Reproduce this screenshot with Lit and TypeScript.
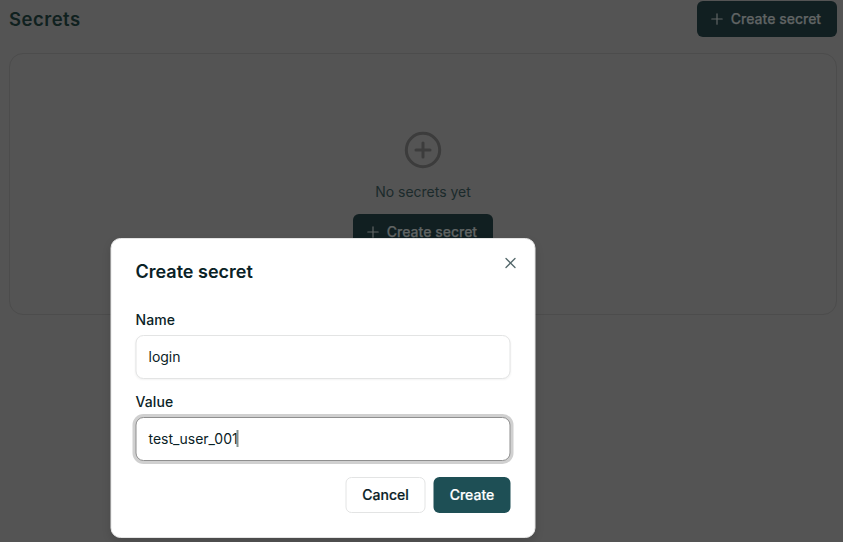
import { LitElement, html, css, svg } from "lit";
import { customElement, property } from "lit/decorators.js";

const plus = html`<svg class="plus" width="12" height="12" viewBox="0 0 12 12" fill="none" stroke="currentColor" stroke-width="1.2" stroke-linecap="round">
  ${svg`<path d="M6 .8v10.4M.8 6h10.4" />`}
</svg>`;

@customElement("text-field")
class TextField extends LitElement {
  @property() label = "";
  @property() value = "";
  @property({ type: Boolean, reflect: true }) active = false;

  static styles = css`
    :host { display: block; }
    .label { font-size: 14px; font-weight: 500; line-height: 20px; height: 25px; letter-spacing: 0.1px; }
    .box {
      display: flex; align-items: center; height: 44px; box-sizing: border-box;
      padding: 0 12px 2px; border: 1px solid #e3e4e4; border-radius: 8px;
      font-size: 14px; background: #fff; box-shadow: 0 1px 2px rgba(0, 0, 0, 0.05);
    }
    :host([active]) .box { border-color: #8f8f8f; box-shadow: 0 0 0 3px #d0d0d0; }
    .caret { width: 2px; height: 17px; background: #83918f; margin-left: -1px; }
  `;

  render() {
    return html`<div class="label">${this.label}</div>
      <div class="box"><span class="text">${this.value}</span>${this.active ? html`<span class="caret"></span>` : ""}</div>`;
  }
}

@customElement("app-root")
class AppRoot extends LitElement {
  static styles = css`
    :host {
      display: block; position: relative; height: 542px; overflow: hidden;
      background: #545454; color: #0a2226; font-family: Inter, sans-serif;
    }
    .page { padding: 1px 6px 0 9px; }
    .head { display: flex; justify-content: space-between; align-items: center; height: 36px; margin-bottom: 16px; }
    h1 { margin: 0; font-size: 18.5px; font-weight: 600; color: #10211f; line-height: 24px; letter-spacing: 0.5px; }
    .create {
      display: flex; align-items: center; justify-content: center; gap: 8px;
      width: 140px; height: 36px; box-sizing: border-box; border-radius: 6px; padding: 0 2px 1px 0;
      background: #111f21; color: #606464; font-size: 14px; font-weight: 500; white-space: nowrap;
      -webkit-text-stroke: 0.25px currentColor;
    }
    .empty {
      display: flex; flex-direction: column; align-items: center; height: 262px; box-sizing: border-box;
      border: 1px solid #4c4c4c; border-radius: 14px; padding-top: 76px;
    }
    .ring { color: #3c3c3c; }
    .note { margin: 12px 0; font-size: 14px; line-height: 20px; color: #1b2a2b; }
    .dialog {
      position: absolute; left: 111px; top: 238px; width: 425px; height: 300px; box-sizing: border-box;
      transform: translateX(-0.5px);
      padding: 22px 24px 0; border: 1px solid #e5e5e5; border-radius: 10px; background: #fff;
      box-shadow: 0 4px 8px rgba(0, 0, 0, 0.12);
    }
    h2 { margin: 0 0 27px; font-size: 18px; line-height: 22px; font-weight: 600; }
    text-field { margin-bottom: 13px; }
    .close { position: absolute; right: 18px; top: 18px; color: #53676a; }
    .actions { display: flex; justify-content: flex-end; gap: 8px; padding-top: 3px; }
    .btn {
      display: flex; align-items: center; justify-content: center; height: 36px; box-sizing: border-box;
      border-radius: 6px; font-size: 14px; font-weight: 500; padding-bottom: 1px;
      -webkit-text-stroke: 0.2px currentColor;
    }
    .cancel { width: 80px; border: 1px solid #e3e4e4; }
    .primary { width: 77px; background: #1e4f55; color: #fff; }
  `;

  render() {
    return html`
      <div class="page">
        <div class="head">
          <h1>Secrets</h1>
          <div class="create">${plus}<span>Create secret</span></div>
        </div>
        <div class="empty">
          <svg class="ring" width="40" height="40" viewBox="0 0 40 40" fill="none" stroke="currentColor" stroke-width="3" stroke-linecap="round">
            <circle cx="20" cy="20" r="16.7" />
            <path d="M20 13v14M13 20h14" />
          </svg>
          <div class="note">No secrets yet</div>
          <div class="create">${plus}<span>Create secret</span></div>
        </div>
      </div>
      <div class="dialog">
        <svg class="close" width="12" height="12" viewBox="0 0 12 12" fill="none" stroke="currentColor" stroke-width="1.3" stroke-linecap="round">
          <path d="M1.5 1.5l9 9M10.5 1.5l-9 9" />
        </svg>
        <h2>Create secret</h2>
        <text-field label="Name" value="login"></text-field>
        <text-field label="Value" value="test_user_001" active></text-field>
        <div class="actions">
          <div class="btn cancel">Cancel</div>
          <div class="btn primary">Create</div>
        </div>
      </div>
    `;
  }
}
